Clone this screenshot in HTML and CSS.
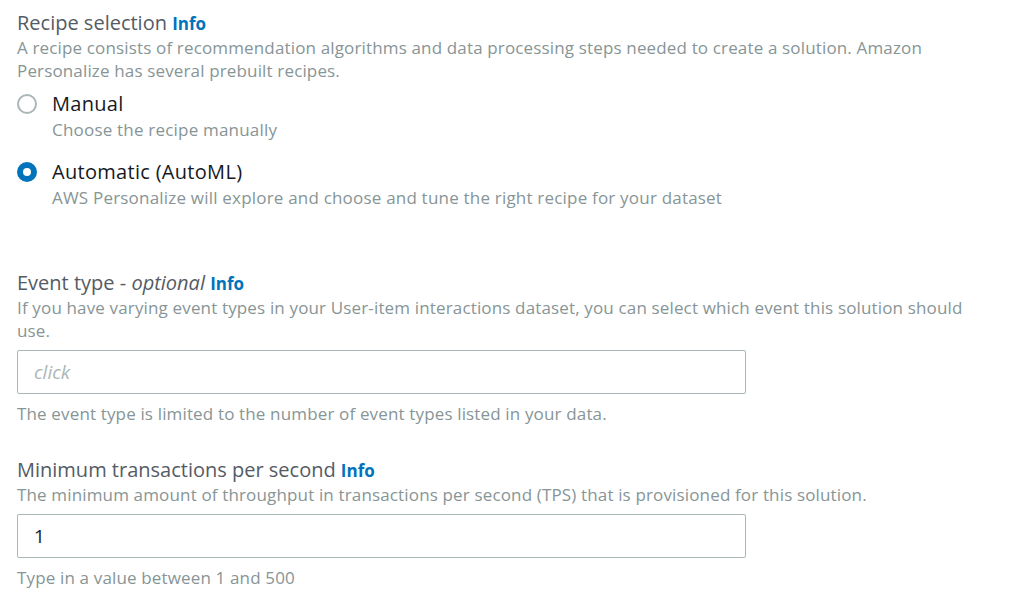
FILE: index.html
```html
<!DOCTYPE html>
<html lang="en">
<head>
    <meta charset="UTF-8">
    <meta name="viewport" content="width=device-width, initial-scale=1.0">
    <title>Solution configuration</title>
    <link rel="stylesheet" href="styles.css">
</head>
<body>
    <!-- Recipe selection -->
    <div class="field recipe">
        <div class="field-label">Recipe selection <a class="info" href="#">Info</a></div>
        <div class="field-desc">A recipe consists of recommendation algorithms and data processing steps needed to create a solution. Amazon Personalize has several prebuilt recipes.</div>
        <div class="radio-group">
            <label class="radio">
                <span class="radio-dot"></span>
                <span class="radio-text">
                    <span class="radio-title">Manual</span>
                    <span class="radio-desc">Choose the recipe manually</span>
                </span>
            </label>
            <label class="radio">
                <span class="radio-dot checked"></span>
                <span class="radio-text">
                    <span class="radio-title">Automatic (AutoML)</span>
                    <span class="radio-desc">AWS Personalize will explore and choose and tune the right recipe for your dataset</span>
                </span>
            </label>
        </div>
    </div>

    <!-- Event type -->
    <div class="field">
        <div class="field-label">Event type - <i>optional</i> <a class="info" href="#">Info</a></div>
        <div class="field-desc">If you have varying event types in your User-item interactions dataset, you can select which event this solution should use.</div>
        <input class="text-input" type="text" placeholder="click">
        <div class="field-hint">The event type is limited to the number of event types listed in your data.</div>
    </div>

    <!-- Minimum TPS -->
    <div class="field">
        <div class="field-label">Minimum transactions per second <a class="info" href="#">Info</a></div>
        <div class="field-desc">The minimum amount of throughput in transactions per second (TPS) that is provisioned for this solution.</div>
        <input class="text-input" type="text" value="1">
        <div class="field-hint">Type in a value between 1 and 500</div>
    </div>
</body>
</html>
```

FILE: styles.css
```css
body {
    font-family: "Open Sans", Arial, sans-serif;
    margin: 0;
    padding: 10px 17px 0 17px;
    background: #ffffff;
    color: #16191f;
}
.field {
    width: 960px;
    margin-bottom: 32px;
}
.field.recipe {
    margin-bottom: 61px;
}
.field-label {
    font-size: 20px;
    line-height: 25px;
    color: #545b64;
}
.info {
    color: #0073bb;
    font-weight: bold;
    font-size: 17px;
    text-decoration: none;
}
.field-desc,
.field-hint {
    font-size: 17px;
    line-height: 23px;
    letter-spacing: 0.15px;
    color: #879596;
}
.field-hint {
    margin-top: 8px;
}
.radio-group {
    margin-top: 8px;
}
.radio {
    display: flex;
    gap: 15px;
    margin-bottom: 17px;
}
.radio:last-child {
    margin-bottom: 0;
}
.radio-dot {
    width: 16px;
    height: 16px;
    border: 2px solid #aab7b8;
    border-radius: 50%;
    margin-top: 4px;
    flex-shrink: 0;
}
.radio-dot.checked {
    border: 6px solid #0073bb;
    width: 8px;
    height: 8px;
}
.radio-text {
    display: flex;
    flex-direction: column;
}
.radio-title {
    font-size: 20px;
    line-height: 28px;
    letter-spacing: 0.3px;
    color: #16191f;
}
.radio-desc {
    font-size: 17px;
    line-height: 23px;
    letter-spacing: 0.2px;
    color: #879596;
}
.text-input {
    display: block;
    box-sizing: border-box;
    width: 729px;
    height: 44px;
    margin-top: 8px;
    padding: 0 16px;
    border: 1px solid #aab7b8;
    border-radius: 2px;
    font-family: "Open Sans", Arial, sans-serif;
    font-size: 19px;
    color: #16191f;
}
.text-input::placeholder {
    color: #aab7b8;
    font-style: italic;
}
```
